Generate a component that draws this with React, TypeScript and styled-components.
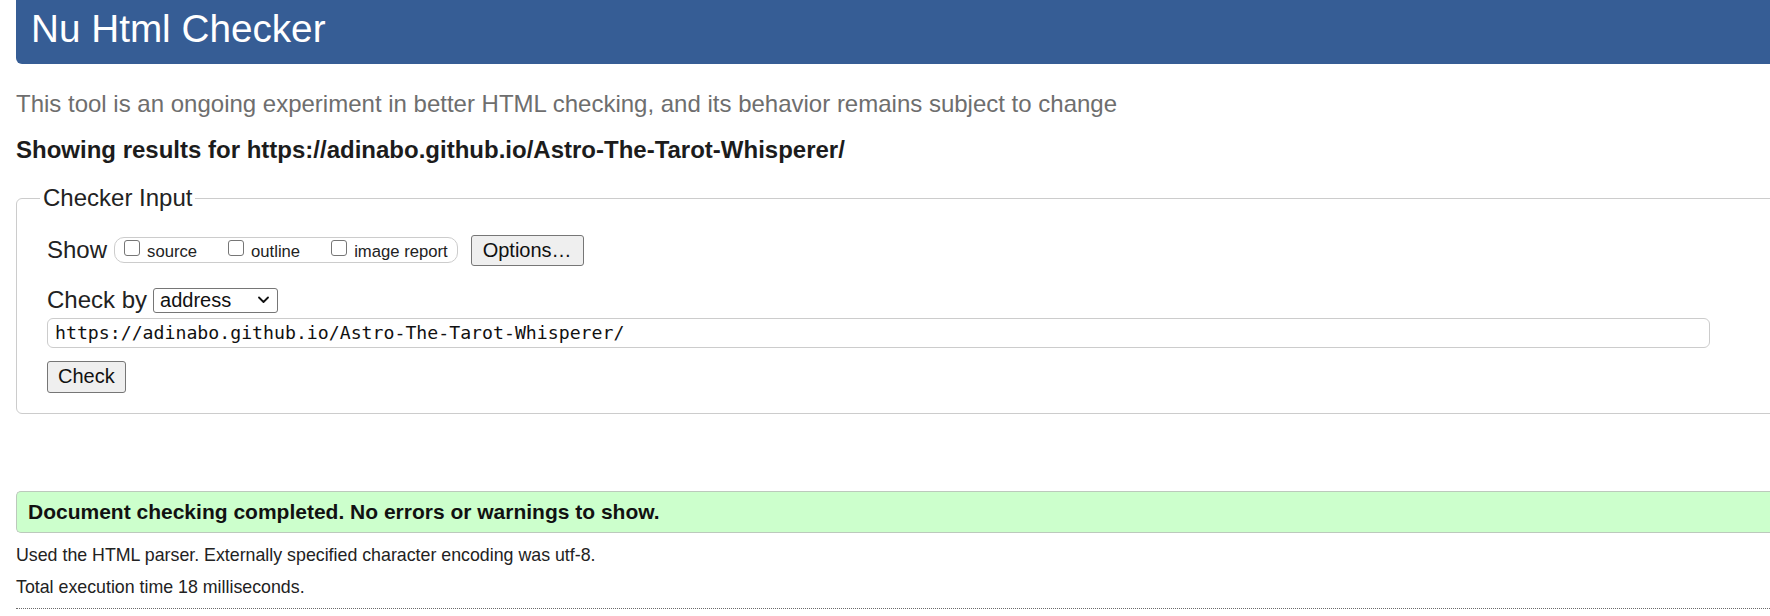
import React from "react";
import styled, { createGlobalStyle } from "styled-components";

const GlobalStyle = createGlobalStyle`
  html, body {
    margin: 0;
    padding: 0;
    background: #ffffff;
    overflow: hidden;
  }
  body {
    font-family: "Liberation Sans", Arial, sans-serif;
    color: #222222;
  }
`;

const Page = styled.div`
  width: 1840px;
  padding-left: 16px;
  box-sizing: border-box;
`;

const Header = styled.header`
  height: 64px;
  box-sizing: border-box;
  padding: 10px 0 0 15px;
  background: #365d95;
  border-radius: 0 0 0 6px;
`;

const Title = styled.h1`
  margin: 0;
  font-size: 38.7px;
  line-height: 1;
  font-weight: normal;
  color: #ffffff;
`;

const Subtitle = styled.p`
  margin: 28.2px 0 0;
  font-size: 24px;
  line-height: 1;
  color: #6e6e6e;
`;

const Results = styled.p`
  margin: 21.5px 0 0;
  font-size: 24px;
  line-height: 1;
  font-weight: bold;
  color: #1c1c1c;
`;

const Fieldset = styled.fieldset`
  margin: 22.8px 0 0;
  padding: 0 0 20px 30px;
  border: 1px solid #cccccc;
  border-radius: 6px;
  min-width: 0;
`;

const Legend = styled.legend`
  margin-left: -7px;
  padding: 0 3px;
  font-size: 24px;
  line-height: 28px;
  color: #222222;
`;

const ShowRow = styled.div`
  display: flex;
  align-items: center;
  height: 31px;
  margin-top: 22.5px;
`;

const CheckByRow = styled.div`
  display: flex;
  align-items: center;
  height: 25px;
  margin-top: 22px;
`;

const FieldLabel = styled.span`
  font-size: 24px;
  line-height: 1;
  color: #222222;
`;

const Pill = styled.span`
  display: flex;
  align-items: center;
  gap: 31px;
  height: 26px;
  box-sizing: border-box;
  margin-left: 7px;
  padding: 0 9px;
  border: 1px solid #cccccc;
  border-radius: 10px;
`;

const CheckItem = styled.label`
  display: flex;
  align-items: flex-start;
  gap: 7px;
`;

const Checkbox = styled.input.attrs({ type: "checkbox" })`
  appearance: none;
  width: 16px;
  height: 16px;
  margin: 0;
  box-sizing: border-box;
  border: 1px solid #767676;
  border-radius: 3px;
  background: #ffffff;
`;

const CheckText = styled.span`
  margin-top: 3.5px;
  font-size: 16.67px;
  line-height: 1;
  color: #222222;
`;

const Button = styled.button<{ $height: number; $pad: number }>`
  display: block;
  height: ${(p) => p.$height}px;
  padding: 0 ${(p) => p.$pad}px;
  font-family: "Liberation Sans", Arial, sans-serif;
  font-size: 20px;
  color: #111111;
  background: #efefef;
  border: 1px solid #767676;
  border-radius: 3px;
`;

const OptionsButton = styled(Button)`
  margin-left: 13px;
`;

const CheckButton = styled(Button)`
  margin-top: 13px;
`;

const SelectWrap = styled.span`
  position: relative;
  display: inline-flex;
  margin-left: 6px;
`;

const Select = styled.select`
  appearance: none;
  width: 125px;
  height: 25px;
  box-sizing: border-box;
  padding: 0 0 0 6px;
  font-family: "Liberation Sans", Arial, sans-serif;
  font-size: 20px;
  color: #111111;
  background: #ffffff;
  border: 1px solid #767676;
  border-radius: 3px;
`;

const Chevron = styled.svg`
  position: absolute;
  right: 9px;
  top: 8px;
  pointer-events: none;
`;

const UrlInput = styled.input`
  display: block;
  margin-top: 5px;
  width: 1663px;
  height: 30px;
  box-sizing: border-box;
  padding: 0 7px;
  font-family: "DejaVu Sans Mono", "Liberation Mono", monospace;
  font-size: 18.2px;
  color: #111111;
  background: #ffffff;
  border: 1px solid #cccccc;
  border-radius: 6px;
`;

const ResultBox = styled.div`
  margin-top: 77px;
  height: 42px;
  box-sizing: border-box;
  padding: 9px 11px 0;
  background: #ccffcc;
  border: 1px solid #bcc9bc;
  border-right: none;
  border-radius: 5px 0 0 5px;
  font-size: 21px;
  line-height: 1;
  font-weight: bold;
  color: #111111;
`;

const Info = styled.p<{ $top: number }>`
  margin: ${(p) => p.$top}px 0 0;
  font-size: 17.8px;
  line-height: 1;
  color: #222222;
`;

const Divider = styled.hr`
  margin: 12px 0 0;
  border: 0;
  border-top: 1px dotted #6a6a6a;
`;

const options = ["source", "outline", "image report"];

export default function App() {
  return (
    <>
      <GlobalStyle />
      <Page>
        <Header>
          <Title>Nu Html Checker</Title>
        </Header>
        <Subtitle>
          This tool is an ongoing experiment in better HTML checking, and its
          behavior remains subject to change
        </Subtitle>
        <Results>
          Showing results for https://adinabo.github.io/Astro-The-Tarot-Whisperer/
        </Results>
        <Fieldset>
          <Legend>Checker Input</Legend>
          <ShowRow>
            <FieldLabel>Show</FieldLabel>
            <Pill>
              {options.map((o) => (
                <CheckItem key={o}>
                  <Checkbox />
                  <CheckText>{o}</CheckText>
                </CheckItem>
              ))}
            </Pill>
            <OptionsButton type="button" $height={31} $pad={11}>
              Options…
            </OptionsButton>
          </ShowRow>
          <CheckByRow>
            <FieldLabel>Check by</FieldLabel>
            <SelectWrap>
              <Select defaultValue="address">
                <option value="address">address</option>
                <option value="file">file upload</option>
                <option value="text">text input</option>
              </Select>
              <Chevron width="11" height="8" viewBox="0 0 11 8">
                <path
                  d="M1 1.5 L5.5 6 L10 1.5"
                  fill="none"
                  stroke="#111"
                  strokeWidth="1.8"
                  strokeLinecap="round"
                  strokeLinejoin="round"
                />
              </Chevron>
            </SelectWrap>
          </CheckByRow>
          <UrlInput
            type="url"
            defaultValue="https://adinabo.github.io/Astro-The-Tarot-Whisperer/"
          />
          <CheckButton type="button" $height={32} $pad={10}>
            Check
          </CheckButton>
        </Fieldset>
        <ResultBox>
          Document checking completed. No errors or warnings to show.
        </ResultBox>
        <Info $top={13.7}>
          Used the HTML parser. Externally specified character encoding was
          utf-8.
        </Info>
        <Info $top={14.2}>Total execution time 18 milliseconds.</Info>
        <Divider />
      </Page>
    </>
  );
}
